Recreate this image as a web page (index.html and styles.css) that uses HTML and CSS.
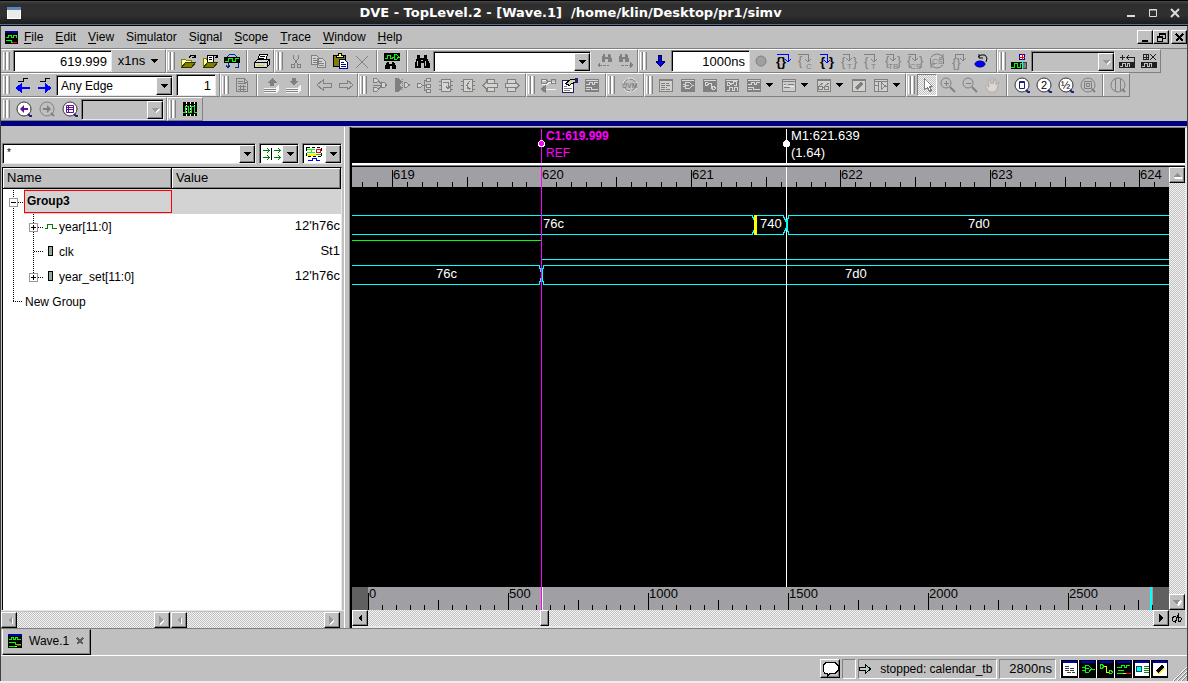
FILE: index.html
```html
<!DOCTYPE html>
<html lang="en">
<head>
  <meta charset="UTF-8" />
  <meta name="viewport" content="width=device-width, initial-scale=1.0"/>
  <title>DVE - TopLevel.2 - [Wave.1]</title>
  <link rel="stylesheet" href="styles.css">
</head>
<body>

  <!-- Window title -->
  <header class="titlebar">
    <svg class="win-icon" width="14" height="12"><path fill="#e8ebe8" stroke="#fff" d="M.5.5h13v11H.5z"/><path fill="#5b86bd" d="M0 0h14v3H0z"/></svg>
    <h1>DVE - TopLevel.2 - [Wave.1] &nbsp;/home/klin/Desktop/pr1/simv</h1>
    <div class="win-buttons">
      <button aria-label="Minimize"><svg width="10" height="10"><path d="M1 8h8" stroke-width="2"/></svg></button>
      <button aria-label="Maximize"><svg width="10" height="10"><path d="M1.500 1.500h7v7h-7z"/><path d="M1 2h8"/></svg></button>
      <button aria-label="Close"><svg width="10" height="10"><path d="M1 1l8 8M9 1l-8 8" stroke-width="2"/></svg></button>
    </div>
  </header>

  <div class="frame">
    <nav class="menubar">
      <svg class="doc-icon" width="13" height="13"><path fill="#000" d="M0 0h13v13H0z"/><path fill="#00a" d="M0 0h13v2H0z"/><path stroke="#0f0" fill="none" d="M1 6.500h2v-2h3v2h2v-2h3v2M1 9.500h5v2h2"/><path stroke="red" d="M8 11.500h4"/></svg>
      <button><u>F</u>ile</button>
      <button><u>E</u>dit</button>
      <button><u>V</u>iew</button>
      <button>Si<u>m</u>ulator</button>
      <button>Si<u>g</u>nal</button>
      <button><u>S</u>cope</button>
      <button><u>T</u>race</button>
      <button><u>W</u>indow</button>
      <button><u>H</u>elp</button>
      <div class="mdi">
        <button class="bevel" aria-label="Minimize view"><svg width="9" height="9"><path d="M1 8h6" stroke-width="2"/></svg></button>
        <button class="bevel" aria-label="Restore view"><svg width="9" height="9"><path d="M2.500 3V.5h6v5H6M3 1.500h6M.5 3.500h5v5h-5zM1 4.500h5"/></svg></button>
        <button class="bevel last" aria-label="Close view"><svg width="9" height="9"><path d="M1 1l7 7M8 1l-7 7" stroke-width="2"/></svg></button>
      </div>
    </nav>

    <div class="toolbars">
      <!-- Row 1 -->
      <div class="bar">
        <div class="group first">
          <i class="grip"></i>
          <input class="field time" value="619.999" aria-label="Time">
          <button class="unit">x1ns <svg width="8" height="4"><path d="M0 0h8L4 4z"/></svg></button>
        </div>
        <div class="group">
          <i class="grip"></i>
          <button class="tool" aria-label="Open database"><svg class="icon"><path fill="#ffffa0" stroke="#808000" d="M1.500 14V6.500h4l1 1h5V9"/><path fill="#808000" stroke="#303000" d="M1.500 14.500l4-5h10l-4 5z"/><path stroke="#000" d="M9 4.500l2-2h3l1 2m0-3v3h-3"/></svg></button>
          <button class="tool" aria-label="Load session"><svg class="icon"><path fill="#ffffa0" stroke="#808000" d="M1.500 14V5.500h3l1 2h5V9"/><path fill="#fff" stroke="#000" d="M5.500 9V2.500h6V9M7 4.500h3M7 6.500h3"/><path fill="#808000" stroke="#303000" d="M1.500 14.500l4-5h10l-4 5z"/><path stroke="#000" d="M12 2.500h2l1 2m0-3v3h-2"/></svg></button>
          <button class="tool" aria-label="Reload"><svg class="icon"><path stroke="#0030a0" d="M3 4l3-3h4l3 3M2 12l2 3 2-3M4 14v-4M11 14h3v-4"/><path fill="#000" stroke="none" d="M0 4h16v6H0z"/><path stroke="#0f0" d="M1 8.500h3v-3h4v3h3v-3h4"/></svg></button>
          <i class="sep"></i>
          <button class="tool" aria-label="Print"><svg class="icon"><path fill="#fff" stroke="#000" d="M5.500 1.500h8l-2 6h-8zM6 3.500h5M5 5.500h5"/><path fill="#d8d8d8" stroke="#000" d="M.5 9.500l3-3h12v5l-3 3H.5z"/><path stroke="#000" d="M1 9.500h12l2-3M13 10v4"/><path stroke="#cc0" d="M3 12.500h7"/></svg></button>
        </div>
        <div class="group">
          <i class="grip"></i>
          <button class="tool" aria-label="Cut"><svg class="icon"><path d="M5.500 2v3l4 6M10.500 2v3l-4 6M3.500 11.500h3v3h-3zM9.500 11.500h3v3h-3z"/></svg></button>
          <button class="tool" aria-label="Copy"><svg class="icon"><path fill="#d4d4d4" d="M1.500 2.500h5l2 2v7h-7zM3 5.500h3M3 7.500h4M3 9.500h4M7.500 5.500h5l3 3v6h-8zM9 8.500h3M9 10.500h5M9 12.500h5"/></svg></button>
          <button class="tool" aria-label="Paste"><svg class="icon"><path fill="#808000" stroke="#000" d="M1.500 2.500h12v11h-12z"/><path fill="#ff6" stroke="#000" d="M4.500 4.500v-2h2v-2h3v2h2v2z"/><path fill="#fff" stroke="#000080" d="M7.500 6.500h5l3 3v6h-8zM9 9.500h3M9 11.500h5M9 13.500h5"/></svg></button>
          <button class="tool" aria-label="Delete"><svg class="icon"><path d="M2 3l12 12M14 3L2 15"/></svg></button>
          <i class="sep"></i>
          <button class="tool" aria-label="Find signal"><svg class="icon"><path fill="#000" stroke="none" d="M0 0h16v8H0zM3 9h2v2h3V9h2l2 4v3H8v-3H6v3H1v-3z"/><path stroke="#0f0" d="M1 5.500h2v-3h3v3h2v-1h2M10.500 1.500h2l2 2-2 3h-2zM14 4.500h2"/></svg></button>
          <i class="sep"></i>
          <button class="tool" aria-label="Find"><svg class="icon"><use href="#binoculars"/></svg></button>
          <div class="combo find">
            <input aria-label="Find text">
            <button class="bevel" aria-label="Find history"><svg width="7" height="4"><use href="#down"/></svg></button>
          </div>
          <button class="tool" aria-label="Find previous"><svg class="icon"><path fill="#808080" stroke="none" d="M7 1h2v3h3V1h2l2 5v3h-4V6h-3v3H6V6zM1 12l3-3v6z"/><path stroke-dasharray="3 1" d="M3 12.500h10"/></svg></button>
          <button class="tool" aria-label="Find next"><svg class="icon"><path fill="#808080" stroke="none" d="M2 1h2v3h3V1h2l2 5v3H7V6H5v3H1V6zM15 12l-3-3v6z"/><path stroke-dasharray="3 1" d="M3 12.500h10"/></svg></button>
        </div>
        <div class="group run">
          <i class="grip"></i>
          <button class="tool" aria-label="Run"><svg class="icon"><path fill="#00f" stroke="#000040" d="M6.500 2.500h3v6h3v1l-4 4-4-4v-1h2z"/></svg></button>
          <input class="field step" value="1000ns" aria-label="Step time">
          <button class="tool" aria-label="Stop"><svg class="icon smooth"><circle cx="8" cy="8" r="5" fill="#a0a0a0"/></svg></button>
          <button class="tool on" aria-label="Next"><svg class="icon"><text x="1" y="13">{}</text><path d="M2 1.500h11v7M10 6l3 3 3-3"/></svg></button>
          <button class="tool" aria-label="Next in C"><svg class="icon"><text x="1" y="12">{</text><text class="sub" x="9" y="16">C</text><path d="M1 1.500h10v7M8 6l3 3 3-3"/></svg></button>
          <button class="tool on" aria-label="Step"><svg class="icon"><text x="1" y="13">{</text><text x="10" y="13">}</text><path d="M1 1.500h7v8M5 7l3 3 3-3"/></svg></button>
          <button class="tool" aria-label="Step thread"><svg class="icon"><text x="0" y="13">{</text><text x="12" y="13">}</text><text class="sub" x="6" y="16">T</text><path d="M2 1.500h6v6M5 5l3 3 3-3"/></svg></button>
          <button class="tool" aria-label="Next thread"><svg class="icon"><text x="1" y="13">{</text><text class="sub" x="8" y="16">T</text><path d="M1 1.500h10v7M8 6l3 3 3-3"/></svg></button>
          <button class="tool" aria-label="Step testbench"><svg class="icon"><text x="0" y="12">{</text><text x="12" y="12">}</text><text class="sub" x="3" y="16">TB</text><path d="M1 1.500h7v6M5 5l3 3 3-3"/></svg></button>
          <button class="tool" aria-label="Step constraint"><svg class="icon"><text x="0" y="12">{</text><text x="12" y="12">}</text><text class="sub" x="3" y="16">CS</text><path d="M1 1.500h7v6M5 5l3 3 3-3"/></svg></button>
          <button class="tool" aria-label="Solver"><svg class="icon smooth"><path d="M2 4q6-6 12 0M14 1v4h-4M14 12q-6 6-12 0M2 15v-4h4"/><text class="sub" x="3" y="11">CS</text><path d="M1.500 5v6M14.500 5v6"/></svg></button>
          <button class="tool" aria-label="Step out"><svg class="icon"><text x="1" y="14">{}</text><path d="M4 5V1.500h8v6M9 5l3 3 3-3"/></svg></button>
          <button class="tool" aria-label="Reset"><svg class="icon smooth"><ellipse cx="7" cy="11" rx="5" ry="3" fill="#00f" stroke="#000080"/><path stroke="#000" d="M5 4l3-2h4l2 3-1 4M6 1v4h4"/></svg></button>
        </div>
        <div class="group">
          <i class="grip"></i>
          <button class="tool" aria-label="Add marker"><svg class="icon"><path fill="#000" stroke="none" d="M0 9h11v7H0z"/><path fill="#808080" stroke="#404040" d="M11.500 9.500h4v6h-4z"/><path stroke="#0f0" d="M0 14.500h3v-4h3v4h3v-4h2"/><path stroke="#0ff" d="M11.500 7v9"/><circle cx="11" cy="4" r="3" fill="#fff" stroke="#00a"/><path stroke="red" d="M8 4.500h6M11.500 1v6"/></svg></button>
          <div class="combo marker off">
            <select aria-label="Marker"><option></option></select>
            <span class="bevel"><svg width="7" height="4"><use href="#down"/></svg></span>
          </div>
          <button class="tool" aria-label="Go to marker"><svg class="icon"><path fill="#202020" stroke="none" d="M0 9h16v6H0z"/><path stroke="#c0c0c0" d="M1 13.500h2v-3h3v3h2v-3h2v3"/><path stroke="#202020" d="M1 4.500h5M3.500 2v5M7 4.500h8v4M10 2L8 4.500 10 7"/></svg></button>
          <button class="tool" aria-label="Delete marker"><svg class="icon"><path fill="#202020" stroke="none" d="M0 9h16v6H0z"/><path stroke="#c0c0c0" d="M1 13.500h2v-3h3v3h2v-3h2v3"/><circle cx="5" cy="4" r="3" stroke="#202020"/><path stroke="#202020" d="M2 4.500h6M5.500 1v6M9 1l6 6M15 1L9 7"/></svg></button>
        </div>
      </div>

      <!-- Row 2 -->
      <div class="bar">
        <div class="group first">
          <i class="grip"></i>
          <button class="tool" aria-label="Previous edge"><svg class="icon"><path fill="#00f" stroke="none" d="M0 11l7-5v4h8v2H7v4z"/><path stroke="#000" d="M3 4.500h5v-3h5"/></svg></button>
          <button class="tool" aria-label="Next edge"><svg class="icon"><path fill="#00f" stroke="none" d="M15 11L8 6v4H1v2h7v4z"/><path stroke="#000" d="M3 4.500h5v-3h5"/></svg></button>
          <div class="combo edge">
            <select aria-label="Edge"><option>Any Edge</option></select>
            <span class="bevel"><svg width="7" height="4"><use href="#down"/></svg></span>
          </div>
          <input class="field count" value="1" aria-label="Count">
        </div>
        <div class="group">
          <i class="grip"></i>
          <button class="tool" aria-label="Memory"><svg class="icon"><path d="M2.500 1.500h8l3 3v10h-11zM10.500 2v3h3M4 4.500h5M4 6.500h8M4 9.500h8M4 12.500h8M6.500 8v6M9.500 8v6"/></svg></button>
          <i class="sep"></i>
          <button class="tool" aria-label="Move up"><svg class="icon"><path fill="#808080" stroke="none" d="M8 1l5 5h-3v3H6V6H3z"/><path stroke="#f4f4f4" d="M0 11.500h12l3-3M0 13.500h12l3-3M0 15.500h12l3-3"/><path d="M0 12.500h12M0 14.500h12"/></svg></button>
          <button class="tool" aria-label="Move down"><svg class="icon"><path fill="#808080" stroke="none" d="M8 8L3 4h3V1h4v3h3z"/><path stroke="#f4f4f4" d="M0 11.500h12l3-3M0 13.500h12l3-3M0 15.500h12l3-3"/><path d="M0 12.500h12M0 14.500h12"/></svg></button>
          <i class="sep"></i>
          <button class="tool" aria-label="Back"><svg class="icon"><path d="M1 8l6-5v3h8v4H7v3z"/></svg></button>
          <button class="tool" aria-label="Forward"><svg class="icon"><path d="M15 8L9 3v3H1v4h8v3z"/></svg></button>
        </div>
        <div class="group wide">
          <i class="grip"></i>
          <button class="tool" aria-label="Fan-in"><svg class="icon"><path fill="#d4d4d0" d="M1.500 1.500h3l2 2-2 2h-3zM1.500 10.500h3l2 2-2 2h-3zM9.500 5.500h3l2 2.500-2 2.500h-3zM6 3.500l3 3M6 12.500l3-3M1 8.500h8"/></svg></button>
          <button class="tool" aria-label="Expand fan-in"><svg class="icon"><path fill="#808080" stroke="none" d="M1 1h4l3 4-2 3 2 3-3 4H1z"/><path fill="#d4d4d0" d="M10.500 5.500h2l3 2.500-3 2.500h-2z"/><path stroke-dasharray="1 1" d="M8.500 2v12"/></svg></button>
          <button class="tool" aria-label="Fan-out"><svg class="icon"><path fill="#d4d4d0" d="M1.500 6.500h3l2 2-2 2h-3zM10.500 1.500h4v3h-4zM10.500 7.500h4v3h-4zM10.500 12.500h4v3h-4zM6 8.500h4M8.500 3v11M8 3.500h2M8 13.500h2"/></svg></button>
          <button class="tool" aria-label="Expand both"><svg class="icon"><path fill="#d4d4d0" d="M3.500 2.500h9v12h-9z"/><path d="M1 4.500h2M1 8.500h2M1 12.500h2M13 4.500h2M13 8.500h2M13 12.500h2M5 5.500h5v6M8 9l2 3 2-3"/></svg></button>
          <button class="tool" aria-label="Collapse both"><svg class="icon"><path fill="#d4d4d0" d="M3.500 2.500h9v12h-9z"/><path d="M1 4.500h2M1 8.500h2M1 12.500h2M13 4.500h2M13 8.500h2M13 12.500h2M10 4L6.500 8.500 10 13M7 6v5h4"/></svg></button>
          <button class="tool" aria-label="Trace drivers"><svg class="icon"><path fill="#d4d4d0" d="M4.500 2.500h8v12h-8z"/><path fill="#d4d4d0" d="M1 8.500l4-4v2h10v4H5v2z"/></svg></button>
          <button class="tool" aria-label="Trace loads"><svg class="icon"><path fill="#d4d4d0" d="M3.500 2.500h8v12h-8z"/><path fill="#d4d4d0" d="M15 8.500l-4-4v2H1v4h10v2z"/></svg></button>
        </div>
        <div class="group wide">
          <i class="grip"></i>
          <button class="tool" aria-label="Driver list"><svg class="icon"><path stroke="#f0f0f0" d="M2 3.500h5l2 2-2 2H2M10 5.500h5M5 12.500h11"/><path d="M1 2.500h5l2 2-2 2H1zM8 4.500h3v-2h4v4h-4v-2"/><path fill="#808080" d="M1 12l4-3v6z"/></svg></button>
          <button class="tool" aria-label="Edit signal"><svg class="icon"><path fill="#fff" stroke="#202060" d="M.5 3.500h11v12H.5z"/><path fill="#d8d4b0" stroke="#000" d="M3.500 6.500l5-4h5v3l-4 1-2 2z"/><path fill="#202080" stroke="none" d="M13 1h3v5h-3z"/><path d="M2 9.500h3M2 11.500h8M2 13.500h6"/></svg></button>
          <button class="tool" aria-label="Signal groups"><svg class="icon"><use href="#wave"/></svg></button>
        </div>
        <div class="group">
          <i class="grip"></i>
          <button class="tool uvm-tool" aria-label="UVM"><svg class="icon smooth"><circle cx="8" cy="8" r="7" stroke="#eee" stroke-dasharray="8 2"/><circle cx="8" cy="8" r="6" stroke-dasharray="7 2"/><text class="uvm" x="0" y="11">UVM</text></svg></button>
        </div>
        <div class="group views">
          <i class="grip"></i>
          <button class="tool" aria-label="Source view"><svg class="icon"><path fill="#d0d0cc" d="M1.500 2.500h13v12h-13z"/><path stroke-width="2" d="M1 3h14"/><path stroke-dasharray="4 1" d="M3 6.500h8M3 8.500h9M3 10.500h6M3 12.500h10"/></svg></button>
          <button class="tool" aria-label="Schematic view"><svg class="icon"><path fill="#808080" d="M1.500 2.500h13v12h-13z"/><path stroke="#d8d8d8" d="M2 3.500h12M5.500 5.500h4l3 3-3 3h-4zM3 7.500h3M3 9.500h3M12 8.500h2M6 8.500h3"/></svg></button>
          <button class="tool" aria-label="Path view"><svg class="icon"><path fill="#808080" d="M1.500 2.500h13v12h-13z"/><path stroke="#d8d8d8" d="M2 3.500h12M3.500 5.500h2l1 1-1 2h-2zM7 6.500h2v5h2M10.500 9.500h2l1 2-1 1h-2z"/></svg></button>
          <button class="tool" aria-label="Trace view"><svg class="icon"><path fill="#808080" d="M1.500 2.500h13v12h-13z"/><path stroke="#d8d8d8" d="M2 3.500h12M3 5.500h2l2 2-2 1H3zM7 6.500h2v-2h3v4h-2M3 13.500h2v-3h3v3h2v-3h3v3"/></svg></button>
          <button class="tool" aria-label="Wave view"><svg class="icon"><use href="#wave"/></svg></button>
          <button class="drop" aria-label="Wave view options"><svg width="8" height="4"><use href="#down"/></svg></button>
          <button class="tool" aria-label="List view"><svg class="icon"><path fill="#ccc" d="M1.500 2.500h13v12h-13z"/><path d="M1 4.500h14M3 7.500h2M7 7.500h6M3 10.500h6"/><path stroke="#eee" d="M3 8.500h2M7 9.500h6"/></svg></button>
          <button class="drop" aria-label="List view options"><svg width="8" height="4"><use href="#down"/></svg></button>
          <button class="tool" aria-label="Watch view"><svg class="icon"><path fill="#d0d0cc" d="M1.500 2.500h13v12h-13z"/><path stroke-width="2" d="M1 3h14"/><path d="M2.500 9.500h4v3h-4zM8.500 9.500h4v3h-4zM6 10.500h3M3 9l4-3M9 9l4-3"/></svg></button>
          <button class="drop" aria-label="Watch view options"><svg width="8" height="4"><use href="#down"/></svg></button>
          <button class="tool" aria-label="Edit view"><svg class="icon"><path fill="#d0d0cc" d="M1.500 2.500h13v12h-13z"/><path stroke-width="2" d="M1 3h14"/><path stroke-width="3" d="M5 12l6-6"/></svg></button>
          <button class="tool" aria-label="Split view"><svg class="icon"><path fill="#d0d0cc" d="M1.500 2.500h13v12h-13z"/><path d="M1 4.500h14M5.500 4v10M2 8.500h4M8.500 6v6l4-3zM12 9.500h2"/></svg></button>
          <button class="drop" aria-label="Split view options"><svg width="8" height="4"><use href="#down"/></svg></button>
        </div>
        <div class="group">
          <i class="grip"></i>
          <button class="tool pressed" aria-label="Select"><svg class="icon"><path fill="#fff" d="M5.500 1.500v11l3-2 2 4 2-1-2-4h3z"/></svg></button>
          <button class="tool" aria-label="Zoom in"><svg class="icon smooth"><circle cx="6" cy="6" r="5"/><path d="M4 6.500h5M6.500 4v5"/><path stroke-width="2" d="M10 10l5 5"/></svg></button>
          <button class="tool" aria-label="Zoom out"><svg class="icon smooth"><circle cx="6" cy="6" r="5"/><path d="M4 6.500h5"/><path stroke-width="2" d="M10 10l5 5"/></svg></button>
          <button class="tool" aria-label="Pan"><svg class="icon smooth"><path fill="#dcd8d4" stroke="#b4aca8" d="M5 15L1 9l1-1 3 2-1-7h2l1 4V1h2v6l2-5h1v6l2-3h1l-2 7-2 3z"/></svg></button>
          <i class="sep"></i>
          <button class="tool" aria-label="Zoom full"><svg class="icon smooth"><use href="#lens"/><path stroke="#202080" d="M5.500 4.500h5v7h-5zM5 5.500h6"/></svg></button>
          <button class="tool" aria-label="Zoom 2x"><svg class="icon smooth"><use href="#lens"/><text class="factor" x="5" y="12">2</text></svg></button>
          <button class="tool" aria-label="Zoom half"><svg class="icon smooth"><use href="#lens"/><text class="factor" x="3" y="12">½</text></svg></button>
          <button class="tool" aria-label="Zoom to selection"><svg class="icon smooth"><circle cx="8" cy="8" r="7"/><path d="M4.500 4.500h7v7h-7zM6.500 6.500h3v3h-3z"/><path stroke-width="2" d="M12 12l3 3"/></svg></button>
          <i class="sep"></i>
          <button class="tool" aria-label="Zoom cursors"><svg class="icon smooth"><circle cx="8" cy="8" r="7"/><path d="M5.500 2v12M10.500 2v12"/><path stroke-width="2" d="M12 12l3 3"/></svg></button>
        </div>
      </div>

      <!-- Row 3 -->
      <div class="bar">
        <div class="group first history">
          <i class="grip"></i>
          <button class="tool" aria-label="Zoom back"><svg class="icon smooth"><use href="#lens"/><path fill="#60109a" stroke="none" d="M4 8l4-4v3h4v2H8v3z"/></svg></button>
          <button class="tool" aria-label="Zoom forward"><svg class="icon smooth"><circle cx="8" cy="8" r="7"/><path fill="#808080" stroke="none" d="M12 8L8 4v3H4v2h4v3z"/><path stroke-width="2" d="M12 12l3 3"/></svg></button>
          <button class="tool" aria-label="Zoom list"><svg class="icon smooth"><use href="#lens"/><path stroke="#60109a" d="M4.500 4.500h7v7h-7zM4 6.500h8M4 8.500h8M6.500 4v8"/></svg></button>
          <div class="combo zoom off">
            <select aria-label="Zoom history"><option></option></select>
            <span class="bevel"><svg width="7" height="4"><use href="#down"/></svg></span>
          </div>
        </div>
        <div class="group">
          <i class="grip"></i>
          <button class="tool grid" aria-label="Grid"><svg class="icon"><path fill="#000" stroke="none" d="M1 1h14v14H1z"/><path stroke="#fff" stroke-dasharray="2 1" d="M4.500 1v14M8.500 1v14M12.500 1v14"/><path stroke="#0f0" d="M1 11.500h2v-6h3v6h3v-6h3v6h3"/></svg></button>
        </div>
      </div>
    </div>

    <main class="workspace">
      <!-- Signal list -->
      <section class="signals">
        <div class="filters">
          <div class="combo filter">
            <input value="*" aria-label="Filter">
            <button class="bevel" aria-label="Filter history"><svg width="8" height="4"><use href="#down"/></svg></button>
          </div>
          <div class="combo kind">
            <svg width="20" height="14"><path stroke="#008000" fill="none" d="M1 3.500h6M1 10.500h6M12 3.500h6M12 10.500h6M5 1l2 2.500L5 6M5 8l2 2.500L5 13M16 1l2 2.500L16 6M16 8l2 2.500-2 2.500"/><path stroke="#000" d="M9.500 1v12"/></svg>
            <button class="bevel" aria-label="Signal direction"><svg width="8" height="4"><use href="#down"/></svg></button>
          </div>
          <div class="combo kind">
            <svg width="18" height="16"><path stroke="#000" fill="none" stroke-dasharray="3 2" d="M1.500 1.500h15v9h-15z"/><path stroke="#0f0" fill="none" d="M2 3.500h8M2 6.500h8M6.500 3v3"/><path stroke="red" fill="none" d="M11.500 3.500h4v3h-4z"/><path stroke="#fe0" stroke-width="2" d="M2 9h9"/><path stroke="#0c0" d="M11 8.500h5"/><path stroke="#00f" fill="none" d="M3 14.500h4v-2h4v2h4"/></svg>
            <button class="bevel" aria-label="Signal type"><svg width="8" height="4"><use href="#down"/></svg></button>
          </div>
        </div>
        <div class="list">
          <table>
            <thead><tr><th>Name</th><th>Value</th></tr></thead>
            <tbody>
              <tr class="selected">
                <td><div class="cell"><svg class="tree" width="21" height="25"><path class="dots" d="M10.500 1v24M11 13.500h10"/><path class="box" d="M6.500 9.500h8v8h-8z"/><path class="sign" d="M8 13.500h5"/></svg><span class="name">Group3</span></div></td>
                <td></td>
              </tr>
              <tr>
                <td><div class="cell"><svg class="tree" width="56" height="25"><path class="dots" d="M10.500 0v25M30.500 0v25M31 13.500h10"/><path class="box" d="M26.500 9.500h8v8h-8z"/><path class="sign" d="M28 13.500h5M30.500 11v5"/><path stroke="#008000" d="M42 14.500h2v-4h5v4h5"/></svg>year[11:0]</div></td>
                <td>12'h76c</td>
              </tr>
              <tr>
                <td><div class="cell"><svg class="tree" width="56" height="25"><path class="dots" d="M10.500 1v24M30.500 1v24M31 12.500h9"/><path fill="#8fa8a0" stroke="#000" d="M45.500 7.500h4v9h-4z"/></svg>clk</div></td>
                <td>St1</td>
              </tr>
              <tr>
                <td><div class="cell"><svg class="tree" width="56" height="25"><path class="dots" d="M10.500 0v25M30.500 0v13M31 13.500h10"/><path class="box" d="M26.500 9.500h8v8h-8z"/><path class="sign" d="M28 13.500h5M30.500 11v5"/><path fill="#8fa8a0" stroke="#000" d="M45.500 7.500h4v9h-4z"/></svg>year_set[11:0]</div></td>
                <td>12'h76c</td>
              </tr>
              <tr>
                <td><div class="cell"><svg class="tree" width="22" height="25"><path class="dots" d="M10.500 1v12M10 12.500h9"/></svg>New Group</div></td>
                <td></td>
              </tr>
            </tbody>
          </table>
        </div>
        <div class="scrolls">
          <div class="hscroll off">
            <button class="bevel" aria-label="Scroll names left"><svg width="5" height="8"><use href="#left"/></svg></button>
            <button class="bevel" aria-label="Scroll names right"><svg width="5" height="8"><use href="#right"/></svg></button>
          </div>
          <div class="hscroll off">
            <button class="bevel" aria-label="Scroll values left"><svg width="5" height="8"><use href="#left"/></svg></button>
            <button class="bevel" aria-label="Scroll values right"><svg width="5" height="8"><use href="#right"/></svg></button>
          </div>
        </div>
      </section>

      <!-- Waveforms -->
      <section class="wave">
        <svg class="markers">
          <path stroke="#f0f" d="M189.500 1v35"/>
          <circle cx="189.500" cy="15.500" r="3" fill="#f0f" stroke="#fff"/>
          <text class="c1" x="194" y="12">C1:619.999</text>
          <text class="ref" x="194" y="29">REF</text>
          <path stroke="#fff" d="M434.500 1v35"/>
          <circle cx="434.500" cy="15.500" r="3" fill="#fff" stroke="#fff"/>
          <text x="439" y="12">M1:621.639</text>
          <text x="439" y="29">(1.64)</text>
        </svg>
        <div class="plot">
          <div class="canvas">
            <svg class="ruler top">
              <path d="M40.500 3v17M189.500 3v17M339.500 3v17M488.500 3v17M638.500 3v17M787.500 3v17"/>
              <path d="M115.500 10v10M264.500 10v10M414.500 10v10M563.500 10v10M713.500 10v10"/>
              <path d="M10.500 15v5m15-5v5m30-5v5m15-5v5m15-5v5m15-5v5m30-5v5m15-5v5m15-5v5m14-5v5m30-5v5m15-5v5m15-5v5m15-5v5m30-5v5m15-5v5m15-5v5m15-5v5m30-5v5m15-5v5m15-5v5m15-5v5m30-5v5m15-5v5m15-5v5m14-5v5m30-5v5m15-5v5m15-5v5m15-5v5m30-5v5m15-5v5m15-5v5m14-5v5m31-5v5m15-5v5m15-5v5m15-5v5m30-5v5m15-5v5m15-5v5m14-5v5m30-5v5"/>
              <text x="41" y="12">619</text>
              <text x="190" y="12">620</text>
              <text x="340" y="12">621</text>
              <text x="489" y="12">622</text>
              <text x="639" y="12">623</text>
              <text x="788" y="12">624</text>
              <path class="cursor" d="M189.500 0v20"/>
              <path class="mark" d="M434.500 0v20"/>
            </svg>
            <svg class="traces">
              <g class="bus">
                <path d="M0 28.500h400l2 4v11l-2 4H0M403 28.500h28l3 6v7l-3 6h-28"/>
                <path d="M437 28.500l-2 6v7l2 6"/>
                <line x1="437" y1="28.500" x2="100%" y2="28.500"/>
                <line x1="437" y1="47.500" x2="100%" y2="47.500"/>
                <line x1="190" y1="72.500" x2="100%" y2="72.500"/>
                <path d="M0 78.500h187l2 6v7l-2 6H0M192 78.500l-2 6v7l2 6"/>
                <line x1="192" y1="78.500" x2="100%" y2="78.500"/>
                <line x1="192" y1="97.500" x2="100%" y2="97.500"/>
              </g>
              <path stroke="#0f0" d="M0 53.500h189"/>
              <path class="cursor" d="M189.500 0v2000"/>
              <path class="mark" d="M434.500 0v2000"/>
              <path class="overlap" d="M434.500 33v10"/>
              <path fill="#ff0" d="M402 28h3v20h-3z"/>
              <text x="191" y="41">76c</text>
              <text x="408" y="41">740</text>
              <text x="616" y="41">7d0</text>
              <text x="84" y="91">76c</text>
              <text x="493" y="91">7d0</text>
            </svg>
            <svg class="ruler overview">
              <path stroke="none" fill="#606060" d="M0 0h16v23H0zM801 0h2000v23H801z"/>
              <path d="M16.500 6v17m140-17v17m140-17v17m140-17v17m140-17v17m140-17v17"/>
              <path d="M86.500 13v10m140-10v10m140-10v10m140-10v10m140-10v10m140-10v10"/>
              <path d="M30.500 18v5m14-5v5m14-5v5m14-5v5m28-5v5m14-5v5m14-5v5m14-5v5m28-5v5m14-5v5m14-5v5m14-5v5m28-5v5m14-5v5m14-5v5m14-5v5m28-5v5m14-5v5m14-5v5m14-5v5m28-5v5m14-5v5m14-5v5m14-5v5m28-5v5m14-5v5m14-5v5m14-5v5m28-5v5m14-5v5m14-5v5m14-5v5m28-5v5m14-5v5m14-5v5m14-5v5m28-5v5m14-5v5m14-5v5m14-5v5m28-5v5m14-5v5m14-5v5m14-5v5m28-5v5"/>
              <text x="17" y="11">0</text>
              <text x="157" y="11">500</text>
              <text x="297" y="11">1000</text>
              <text x="437" y="11">1500</text>
              <text x="577" y="11">2000</text>
              <text x="717" y="11">2500</text>
              <path class="cursor" d="M189.500 0v23"/>
              <path class="mark" d="M190.500 0v23"/>
              <path stroke="#0ff" stroke-width="2" d="M799 0v23"/>
            </svg>
          </div>
          <div class="vscroll off">
            <button class="bevel" aria-label="Scroll up"><svg width="8" height="5"><path fill="#909090" d="M0 4l4-4 4 4z"/><path stroke="#fff" d="M1 4.500h7"/></svg></button>
            <button class="bevel" aria-label="Scroll down"><svg width="8" height="5"><path fill="#909090" d="M0 0h8L4 5z"/><path stroke="#fff" d="M8 0L4 5"/></svg></button>
          </div>
          <div class="hscroll time-scroll">
            <button class="bevel" aria-label="Scroll left"><svg width="5" height="8"><use href="#left"/></svg></button>
            <button class="bevel thumb" aria-label="Scroll position"></button>
            <button class="bevel" aria-label="Scroll right"><svg width="5" height="8"><use href="#right"/></svg></button>
          </div>
          <button class="link" aria-label="Link windows"><svg width="12" height="12"><path fill="none" stroke="#000" d="M4.500 4.500h-2l-1 2v2l1 1h2l1-2v-2zM7.500 2v7h2l1-2-1-2h-2M8 1L4 11"/></svg></button>
        </div>
      </section>
    </main>

    <div class="tabs">
      <button class="tab">
        <svg width="14" height="14"><path d="M0 0h14v14H0z"/><path fill="#00a" d="M0 0h14v2H0z"/><path stroke="#0f0" fill="none" d="M1 5.500h2v-2h2v2h2v-2h2v2h4M1 8.500h6v2h6M1 12.500h7"/><path stroke="#fe0" d="M7 12.500h2"/><path stroke="red" d="M9 11.500h4"/></svg>
        Wave.1
        <svg width="8" height="8"><path stroke="#606060" stroke-width="2" d="M1 1l6 6M7 1L1 7"/></svg>
      </button>
    </div>

    <footer class="status">
      <button class="talk bevel" aria-label="Messages"><svg width="17" height="16"><path fill="#fff" stroke="#000" d="M4 1.500h9l3 3v5l-3 3H8l-3 3v-3H3l-2-3v-5z"/></svg></button>
      <span class="well small"></span>
      <span class="well state"><svg width="12" height="10"><path fill="#b4d0c4" stroke="#000" d="M.5 3.500h6v-3l5 4.500-5 4.500v-3h-6z"/></svg>stopped: calendar_tb</span>
      <span class="well">2800ns</span>
      <div class="panes">
        <button aria-label="Source"><svg class="pane"><path fill="#fff" d="M0 0h14v13H0z"/><path stroke="#404040" stroke-dasharray="4 1" d="M2 3.500h5M2 5.500h9M2 7.500h10M4 9.500h8"/></svg></button>
        <button aria-label="Schematic"><svg class="pane"><path stroke="#0f0" fill="none" d="M4.500 2.500h3l3 3-3 4h-3zM1 4.500h3M1 7.500h3M10 6.500h4M5 5.500h3"/></svg></button>
        <button aria-label="Path"><svg class="pane"><path stroke="#0f0" fill="none" d="M1.500 1.500h2l1 2-1 2h-2zM10.500 7.500h2l1 2-1 1h-2z"/><path stroke="#fe0" fill="none" d="M5 3.500h2v6h3"/></svg></button>
        <button aria-label="Wave"><svg class="pane"><path stroke="#0f0" fill="none" d="M0 4.500h4v-2h3v2h2v-2h4M1 7.500h6M0 10.500h6"/><path stroke="#fe0" d="M6 10.500h3"/><path stroke="red" d="M9 10.500h5"/></svg></button>
        <button aria-label="List"><svg class="pane"><path fill="#fff" d="M0 0h14v13H0z"/><circle cx="4" cy="6" r="3" fill="#0ff" stroke="#055"/><path stroke="#080" d="M9 3.500h5M9 5.500h5M9 7.500h5M9 9.500h5"/></svg></button>
        <button aria-label="Edit"><svg class="pane"><path fill="#fff" d="M0 0h14v13H0z"/><path stroke="#fe0" stroke-width="5" d="M4 10l6-6"/><path stroke="#000" stroke-width="3" d="M4 9l6-6"/></svg></button>
      </div>
      <svg class="resize" width="14" height="14"><path stroke="#808080" d="M1 14L14 1M5 14l9-9M9 14l5-5"/><path stroke="#fff" d="M0 14L14 0M4 14L14 4M8 14l6-6"/></svg>
    </footer>
  </div>

  <!-- Shared shapes -->
  <svg class="defs">
    <symbol id="down" viewBox="0 0 8 4"><path d="M0 0h8L4 4z"/></symbol>
    <symbol id="left" viewBox="0 0 5 8"><path d="M5 0v8L1 4z"/></symbol>
    <symbol id="right" viewBox="0 0 5 8"><path d="M0 0v8l4-4z"/></symbol>
    <symbol id="lens" viewBox="0 0 16 16"><circle cx="8" cy="8" r="7" fill="#fff" stroke="#333"/><path stroke="#202080" stroke-width="2" d="M12 13l2 2h2"/></symbol>
    <symbol id="binoculars" viewBox="0 0 16 16"><path fill="#000" stroke="none" d="M3 2h3v3h4V2h3v3l3 6v4h-6v-5H7v5H1v-4l2-6z"/><path stroke="#c0c0c0" d="M3.500 8v5M11.500 8v5M7 7.500h2"/></symbol>
    <symbol id="wave" viewBox="0 0 16 16"><path fill="#808080" stroke="#808080" d="M1.500 2.500h13v12h-13z"/><path stroke="#d8d8d8" d="M2 3.500h12M2 7.500h3v-2h3v2h2v-2h4M2 10.500h5v2h7M2 12.500h4"/></symbol>
  </svg>

</body>
</html>
```
FILE: styles.css
```css
:root {
  --face: #c0c0c0;
  --shade: #808080;
  --ruler: #a0a0a4;
  --navy: #000080;
  --checker: repeating-conic-gradient(#c0c0c0 0 25%, #f4f4f4 0 50%) 0 0 / 2px 2px;
}

* {
  margin: 0;
  padding: 0;
  box-sizing: border-box;
}

body {
  display: flex;
  flex-direction: column;
  height: 100vh;
  background: #ececec;
  color: #000;
  font-family: "Liberation Sans", Arial, sans-serif;
  font-size: 12px;
  line-height: 16px;
  overflow: hidden;
}

button,
input,
select {
  font: inherit;
  color: inherit;
  border: none;
  border-radius: 0;
  background: none;
}

input,
select {
  min-width: 0;
  outline: none;
  appearance: none;
}

button,
.bevel {
  display: flex;
  align-items: center;
  justify-content: center;
  flex: none;
}

svg {
  display: block;
  flex: none;
  shape-rendering: crispEdges;
}

.defs {
  position: absolute;
  width: 0;
  height: 0;
}

.bevel {
  background: var(--face);
  border: 1px solid;
  border-color: #fff #000 #000 #fff;
  box-shadow: inset -1px -1px var(--shade);
}

/* Title bar */
.titlebar {
  display: flex;
  align-items: center;
  flex: none;
  height: 26px;
  padding: 0 8px 0 7px;
  background: linear-gradient(#484848, #2e2e2e 3px, #303030 14px, #1a1a1a);
  border-top: 1px solid #000;
  border-bottom: 1px solid #000;
  box-shadow: inset 0 -1px #4d6f99;
}

.titlebar h1 {
  flex: 1;
  padding-right: 6px;
  font: bold 13px/24px "DejaVu Sans", sans-serif;
  text-align: center;
  color: #fff;
  white-space: nowrap;
}

.win-buttons {
  display: flex;
  gap: 12px;
}

.win-buttons svg {
  fill: none;
  stroke: #ddd;
  shape-rendering: auto;
}

.frame {
  display: flex;
  flex-direction: column;
  flex: 1;
  min-height: 0;
  margin-bottom: 2px;
  background: var(--face);
  border-left: 1px solid #404040;
  border-right: 1px solid #404040;
}

/* Menu */
.menubar {
  display: flex;
  align-items: center;
  flex: none;
  height: 22px;
  padding-left: 4px;
}

.menubar > button {
  padding: 0 6px;
}

.menubar u {
  text-underline-offset: 2px;
}

.mdi {
  display: flex;
  margin-left: auto;
}

.mdi .bevel {
  width: 16px;
  height: 14px;
}

.mdi .last {
  margin-left: 2px;
}

.mdi svg {
  fill: none;
  stroke: #000;
}

/* Toolbars */
.toolbars {
  flex: none;
  border-top: 1px solid var(--shade);
  border-bottom: 5px solid var(--navy);
}

.bar {
  display: flex;
  height: 24px;
}

.group {
  display: flex;
  align-items: center;
  border: 1px solid;
  border-color: #fff var(--shade) var(--shade) #fff;
}

.group.first {
  border-left: none;
  padding-left: 1px;
  padding-right: 3px;
}

.group.wide {
  padding-right: 2px;
}

.group.run {
  padding-right: 4px;
}

.group.history {
  padding-right: 2px;
}

.grip {
  flex: none;
  width: 7px;
  height: 18px;
  margin: 0 2px 0 1px;
  background: linear-gradient(90deg, #fff 1px, var(--face) 1px 2px, var(--shade) 2px 3px, #fff 3px 5px, var(--face) 5px 6px, var(--shade) 6px);
}

.sep {
  align-self: stretch;
  width: 8px;
  background: linear-gradient(90deg, transparent 3px, var(--shade) 3px 4px, #fff 4px 5px, transparent 5px);
}

.tool {
  width: 22px;
  height: 22px;
}

.icon {
  width: 16px;
  height: 16px;
  fill: none;
  stroke: var(--shade);
  overflow: visible;
}

.smooth {
  shape-rendering: auto;
}

.icon text {
  fill: var(--shade);
  stroke: none;
  font-size: 13px;
}

.icon .sub {
  font-size: 8px;
}

.icon .uvm {
  font-size: 7px;
  font-weight: bold;
}

.icon .factor {
  fill: #000;
  font-size: 11px;
}

.on .icon {
  stroke: #00f;
}

.on .icon text {
  fill: #000;
  font-weight: bold;
}

.pressed {
  width: 20px;
  background: var(--checker);
  border: 1px solid;
  border-color: var(--shade) #fff #fff var(--shade);
}

.uvm-tool {
  width: 26px;
}

.drop {
  justify-content: flex-start;
  width: 13px;
}

.field {
  height: 22px;
  padding: 1px 4px 0;
  background: #fff;
  border: 1px solid;
  border-color: var(--shade) #e8e8e8 #e8e8e8 var(--shade);
  box-shadow: inset 1px 1px #000;
  font-size: 13px;
  text-align: right;
}

.time {
  width: 99px;
  margin-left: 1px;
}

.step {
  width: 79px;
}

.count {
  width: 40px;
  margin-left: 3px;
}

.unit {
  gap: 5px;
  width: 48px;
  margin-left: 2px;
  font-size: 13px;
}

.combo {
  display: flex;
  align-items: center;
  height: 21px;
  padding: 1px 0 0 1px;
  background: #fff;
  border: 1px solid;
  border-color: var(--shade) #e8e8e8 #e8e8e8 var(--shade);
  box-shadow: inset 1px 1px #000;
}

.combo input,
.combo select {
  flex: 1;
  height: 17px;
  padding-left: 3px;
}

.combo .bevel {
  width: 16px;
  height: 18px;
}

.combo.off {
  background: var(--face);
}

.off .bevel svg {
  fill: #999;
  filter: drop-shadow(1px 1px #fff);
}

.find {
  width: 158px;
  margin-right: 2px;
}

.marker {
  width: 84px;
  margin: 0 1px;
}

.edge {
  width: 117px;
}

.zoom {
  width: 83px;
}

.history .tool {
  width: 23px;
}

.grid {
  width: 24px;
}

/* Workspace */
.workspace {
  display: flex;
  flex: 1;
  min-height: 0;
  padding-top: 1px;
}

.signals {
  display: flex;
  flex-direction: column;
  flex: none;
  width: 29%;
  border-right: 1px solid #fff;
}

.filters {
  display: flex;
  gap: 3px;
  padding: 16px 2px 3px 1px;
}

.filter {
  flex: 1;
  font-size: 10px;
}

.filter input {
  padding-bottom: 4px;
}

.kind {
  justify-content: space-between;
  width: 40px;
  padding-left: 2px;
}

.kind svg {
  overflow: visible;
}

.list {
  flex: 1;
  margin: 0 2px 0 1px;
  background: #fff;
  border-left: 1px solid #000;
  border-top: 1px solid #000;
  border-right: 1px solid #e8e8e8;
}

table {
  width: 100%;
  border-spacing: 0;
  table-layout: fixed;
}

th {
  height: 21px;
  padding-left: 4px;
  background: var(--face);
  border-right: 1px solid #000;
  border-bottom: 1px solid #000;
  box-shadow: inset 1px 1px #fff, inset -1px -1px var(--shade);
  font-weight: normal;
  font-size: 13px;
  text-align: left;
}

td {
  height: 25px;
  vertical-align: middle;
}

td + td {
  padding: 0 1px 1px 0;
  text-align: right;
  font-size: 13px;
}

.cell {
  display: flex;
  align-items: center;
  height: 25px;
  white-space: nowrap;
}

.tree {
  fill: none;
}

.tree .dots {
  stroke: #000;
  stroke-dasharray: 1 1;
}

.tree .box {
  fill: #fff;
  stroke: #999;
}

.tree .sign {
  stroke: #000;
}

.name {
  flex: 1;
  height: 23px;
  padding-left: 2px;
  border: 1px solid red;
  line-height: 20px;
  font-weight: bold;
}

.selected {
  background: linear-gradient(90deg, #fff 21px, #d3d3d3 21px);
}

.scrolls {
  display: flex;
  flex: none;
  gap: 1px;
  height: 18px;
  padding: 1px 4px 0 0;
  border-top: 1px solid #e8e8e8;
}

.hscroll {
  display: flex;
  justify-content: space-between;
  flex: 1;
  background: var(--checker);
}

.hscroll .bevel {
  width: 16px;
  height: 16px;
}

.wave {
  display: flex;
  flex-direction: column;
  flex: 1;
  min-width: 0;
  margin-left: 5px;
  border-top: 1px solid var(--shade);
  border-left: 2px solid #000;
  border-right: 2px solid #e8e8e8;
  box-shadow: -1px 0 var(--shade);
}

.markers {
  flex: none;
  width: 100%;
  height: 35px;
  background: #000;
  font-size: 13px;
}

.markers text,
.traces text {
  fill: #fff;
}

.markers .c1 {
  fill: #f0f;
  font-size: 12px;
  font-weight: bold;
}

.markers .ref {
  fill: #f0f;
  font-size: 12px;
}

.cursor {
  stroke: #f0f;
}

.mark {
  stroke: #fff;
}

.overlap {
  stroke: #0ff;
}

.plot {
  display: grid;
  grid-template-columns: 1fr 16px;
  grid-template-rows: 1fr 16px;
  flex: 1;
  min-height: 0;
  border-top: 1px solid #000;
  border-bottom: 2px solid #e8e8e8;
  margin-top: 3px;
  box-shadow: 0 -1px var(--shade), 0 -3px #fff;
}

.canvas {
  display: flex;
  flex-direction: column;
  min-width: 0;
  min-height: 0;
}

.ruler {
  width: 100%;
  background: var(--ruler);
  font-size: 13px;
}

.ruler path {
  stroke: #000;
}

.ruler .cursor {
  stroke: #f0f;
}

.ruler .mark {
  stroke: #fff;
}

.top {
  height: 20px;
}

.overview {
  height: 23px;
}

.overview path[fill] {
  stroke: none;
}

.overview path[stroke="#0ff"] {
  stroke: #0ff;
}

.traces {
  flex: 1;
  width: 100%;
  min-height: 0;
  background: #000;
  fill: none;
  font-size: 13px;
}

.bus {
  stroke: #0ff;
}

.vscroll {
  display: flex;
  flex-direction: column;
  justify-content: space-between;
  background: var(--checker);
}

.vscroll .bevel {
  height: 16px;
}

.time-scroll .thumb {
  width: 9px;
  margin-left: 172px;
  margin-right: auto;
}

/* Tabs and status */
.tabs {
  flex: none;
  height: 28px;
  padding-left: 1px;
  border-top: 1px solid var(--shade);
  border-bottom: 1px solid #fff;
}

.tab {
  gap: 7px;
  height: 26px;
  padding: 0 6px 3px 5px;
  border: 1px solid;
  border-color: var(--face) #000 #000 #fff;
  box-shadow: inset -1px -1px var(--shade);
}

.status {
  display: flex;
  align-items: center;
  justify-content: flex-end;
  flex: none;
  gap: 2px;
  height: 25px;
  font-size: 13px;
}

.talk {
  width: 20px;
  height: 19px;
}

.well {
  display: flex;
  align-items: center;
  height: 20px;
  padding: 0 3px 0 9px;
  border: 1px solid;
  border-color: var(--shade) #fff #fff var(--shade);
}

.well.small {
  width: 14px;
  padding: 0;
}

.well.state {
  gap: 9px;
  padding: 0 4px 0 0;
  font-size: 12px;
}

.panes {
  display: flex;
  margin-left: 2px;
}

.panes button {
  width: 18px;
  height: 18px;
  background: #000;
  border-left: 1px solid #fff;
}

.pane {
  width: 14px;
  height: 15px;
  border-top: 2px solid #0000c0;
}

.resize {
  align-self: flex-end;
  margin-left: 3px;
}
```
